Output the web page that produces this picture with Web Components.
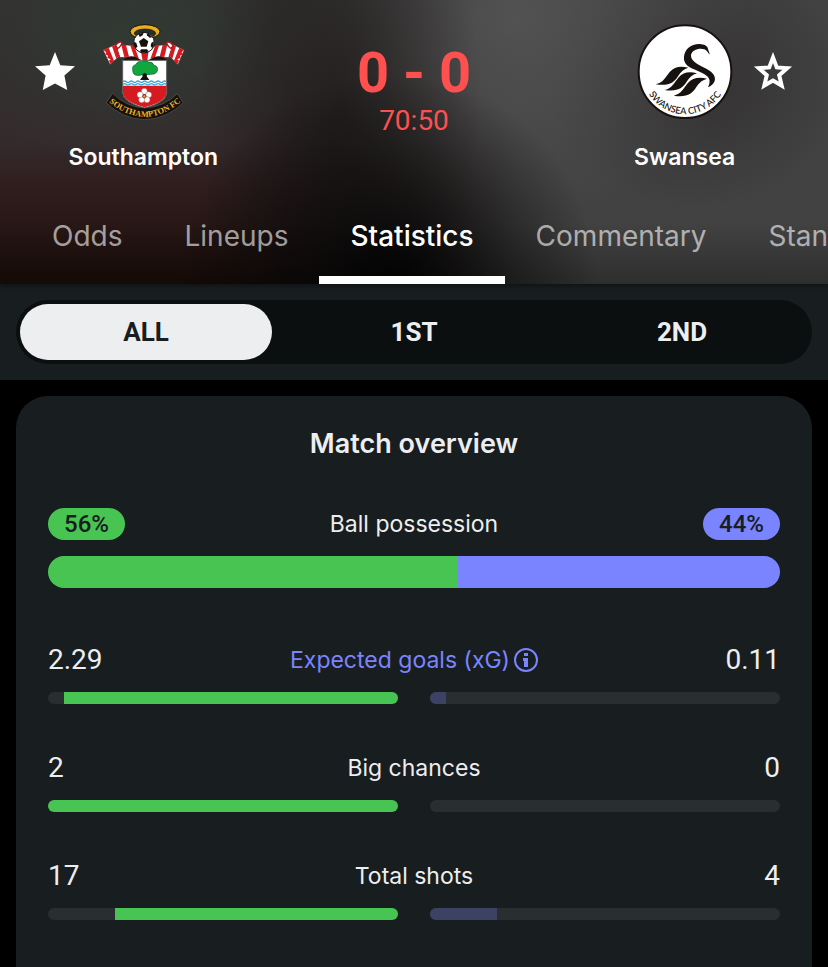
<!DOCTYPE html>
<html lang="en">
<head>
<meta charset="utf-8">
<meta name="viewport" content="width=device-width, initial-scale=1">
<title>Southampton - Swansea</title>
<style>
    body {
        margin: 0;
        background: #000;
        color: #edeef0;
        font-family: Inter, "Liberation Sans", sans-serif;
        --font-number: Roboto, "Liberation Sans", sans-serif;
        --surface: #181d1f;
        --home: #48c453;
        --away: #7a84ff;
        --live: #ff5050;
    }
</style>
</head>
<body>
<match-page>
    <match-header slot="header">
        <team-badge slot="home" name="Southampton" favourite><crest-southampton></crest-southampton></team-badge>
        <live-score slot="score" score="0 - 0" time="70:50"></live-score>
        <team-badge slot="away" name="Swansea" side="away"><crest-swansea></crest-swansea></team-badge>
        <match-tabs slot="tabs" items="Odds,Lineups,Statistics,Commentary,Standings" active="Statistics"></match-tabs>
    </match-header>
    <period-switch slot="periods" items="ALL,1ST,2ND" active="ALL"></period-switch>
    <stats-card heading="Match overview">
        <possession-row label="Ball possession" home="56" away="44"></possession-row>
        <stat-row label="Expected goals (xG)" home="2.29" away="0.11" info></stat-row>
        <stat-row label="Big chances" home="2" away="0"></stat-row>
        <stat-row label="Total shots" home="17" away="4"></stat-row>
    </stats-card>
</match-page>

<script>
class MatchPage extends HTMLElement {
    constructor() {
        super();
        this.attachShadow({ mode: 'open' });
        this.shadowRoot.innerHTML = `
            <style>
                :host { display: flex; flex-direction: column; min-height: 100vh; }
                main { flex: 1; display: flex; flex-direction: column; padding: 16px 16px 0; }
            </style>
            <slot name="header"></slot>
            <slot name="periods"></slot>
            <main><slot></slot></main>
        `;
    }
}

class MatchHeader extends HTMLElement {
    constructor() {
        super();
        this.attachShadow({ mode: 'open' });
        this.shadowRoot.innerHTML = `
            <style>
                :host {
                    display: block;
                    position: relative;
                    overflow: hidden;
                    box-shadow: 0 2px 4px rgba(0, 0, 0, 0.35);
                    /* blurred club colours behind the score */
                    background:
                        linear-gradient(to bottom, transparent 78%, rgba(0, 0, 0, 0.3)),
                        radial-gradient(ellipse 210px 210px at 47% 100%, #050505 5%, transparent),
                        radial-gradient(ellipse 140px 320px at 41% 40%, rgba(30, 26, 26, 0.8), transparent),
                        radial-gradient(ellipse 240px 200px at 62% 6%, rgba(92, 92, 92, 0.6), transparent),
                        radial-gradient(ellipse 150px 130px at 84% 28%, rgba(46, 44, 44, 0.8), transparent),
                        radial-gradient(ellipse 190px 130px at 16% 14%, rgba(48, 60, 52, 0.8), transparent),
                        linear-gradient(to right, transparent 35%, #434242 62%),
                        linear-gradient(to bottom, #333131, #342a2c 50%, #301d1e 66%, #1c0e09);
                }
                .teams { display: grid; grid-template-columns: 9fr 8fr 9fr; padding: 24px 0 15px; }
            </style>
            <div class="teams">
                <slot name="home"></slot>
                <slot name="score"></slot>
                <slot name="away"></slot>
            </div>
            <slot name="tabs"></slot>
        `;
    }
}

class TeamBadge extends HTMLElement {
    constructor() {
        super();
        this.attachShadow({ mode: 'open' });
        const name = this.getAttribute('name');
        const star = this.hasAttribute('favourite')
            ? '<path d="M20 0L25.3 13.2L40 14.3L29.4 23.4L32.2 38L20 31.5L7.8 38L10.6 23.4L0 14.3L14.7 13.2Z" fill="currentColor"/>'
            : '<path d="M20 5.5L23.8 15.4L34.2 16.2L26.2 23.2L28.7 33.6L20 28.6L11.3 33.6L13.8 23.2L5.8 16.2L16.2 15.4Z" fill="none" stroke="currentColor" stroke-width="4"/>';

        this.shadowRoot.innerHTML = `
            <style>
                :host {
                    display: grid;
                    grid-template-columns: 1fr 96px 1fr;
                    grid-template-areas: "left crest right" "name name name";
                    column-gap: 20px;
                    row-gap: 21px;
                    align-items: center;
                }
                button {
                    grid-area: left;
                    justify-self: end;
                    width: 40px;
                    height: 40px;
                    padding: 0;
                    border: 0;
                    background: none;
                    color: #fff;
                }
                :host([side="away"]) button { grid-area: right; justify-self: start; }
                svg { display: block; }
                slot { grid-area: crest; display: block; }
                .name {
                    grid-area: name;
                    text-align: center;
                    color: #fff;
                    font-size: 23px;
                    font-weight: 600;
                    line-height: 32px;
                }
            </style>
            <button type="button" aria-label="Follow ${name}">
                <svg width="40" height="40" viewBox="0 0 40 40">${star}</svg>
            </button>
            <slot></slot>
            <div class="name">${name}</div>
        `;
    }
}

class LiveScore extends HTMLElement {
    constructor() {
        super();
        this.attachShadow({ mode: 'open' });
        this.shadowRoot.innerHTML = `
            <style>
                :host {
                    display: block;
                    padding-top: 17px;
                    text-align: center;
                    color: var(--live);
                    font-family: var(--font-number);
                }
                .score { font-size: 56px; font-weight: 700; line-height: 64px; }
                .time { font-size: 28px; line-height: 32px; }
            </style>
            <div class="score">${this.getAttribute('score')}</div>
            <div class="time">${this.getAttribute('time')}</div>
        `;
    }
}

class MatchTabs extends HTMLElement {
    constructor() {
        super();
        this.attachShadow({ mode: 'open' });
        const active = this.getAttribute('active');
        const links = this.getAttribute('items').split(',').map(item =>
            `<a href="#${item.toLowerCase()}"${item === active ? ' aria-current="page"' : ''}>${item}</a>`
        ).join('');

        this.shadowRoot.innerHTML = `
            <style>
                :host { display: block; }
                nav { display: flex; padding-left: 21px; overflow: hidden; }
                a {
                    flex: none;
                    box-sizing: border-box;
                    height: 96px;
                    padding: 0 31px;
                    border-bottom: 8px solid transparent;
                    color: rgba(255, 255, 255, 0.6);
                    font-size: 28px;
                    line-height: 96px;
                    text-decoration: none;
                }
                a[aria-current] { color: #fff; border-color: #fff; font-weight: 500; }
            </style>
            <nav>${links}</nav>
        `;
    }
}

class PeriodSwitch extends HTMLElement {
    constructor() {
        super();
        this.attachShadow({ mode: 'open' });
        const active = this.getAttribute('active');
        const buttons = this.getAttribute('items').split(',').map(item =>
            `<button type="button" aria-pressed="${item === active}">${item}</button>`
        ).join('');

        this.shadowRoot.innerHTML = `
            <style>
                :host { display: block; padding: 16px; background: var(--surface); }
                div {
                    display: grid;
                    grid-template-columns: repeat(3, 1fr);
                    gap: 16px;
                    padding: 4px;
                    border-radius: 32px;
                    background: #0b0f10;
                }
                button {
                    height: 56px;
                    padding: 0;
                    border: 0;
                    border-radius: 28px;
                    background: none;
                    color: #edeef0;
                    font-family: var(--font-number);
                    font-size: 26px;
                    font-weight: 700;
                }
                button[aria-pressed="true"] { background: #edeef0; color: var(--surface); }
            </style>
            <div>${buttons}</div>
        `;
    }
}

class StatsCard extends HTMLElement {
    constructor() {
        super();
        this.attachShadow({ mode: 'open' });
        this.shadowRoot.innerHTML = `
            <style>
                :host {
                    flex: 1;
                    display: flex;
                    flex-direction: column;
                    gap: 48px;
                    padding: 32px;
                    border-radius: 32px 32px 0 0;
                    background: var(--surface);
                }
                h2 { margin: 0; text-align: center; font-size: 27px; font-weight: 600; line-height: 32px; }
            </style>
            <h2>${this.getAttribute('heading')}</h2>
            <slot></slot>
        `;
    }
}

class PossessionRow extends HTMLElement {
    constructor() {
        super();
        this.attachShadow({ mode: 'open' });
        const home = this.getAttribute('home');
        const away = this.getAttribute('away');

        this.shadowRoot.innerHTML = `
            <style>
                :host { display: block; margin-bottom: 8px; font-size: 23px; line-height: 32px; }
                .head { display: flex; justify-content: space-between; margin-bottom: 16px; }
                .pill {
                    padding: 0 16px;
                    border-radius: 16px;
                    color: var(--surface);
                    font-family: var(--font-number);
                    font-size: 24px;
                    font-weight: 500;
                }
                .bar { display: flex; height: 32px; border-radius: 16px; overflow: hidden; }
                .home { background: var(--home); }
                .away { background: var(--away); }
            </style>
            <div class="head">
                <span class="pill home">${home}%</span>
                <span>${this.getAttribute('label')}</span>
                <span class="pill away">${away}%</span>
            </div>
            <div class="bar">
                <div class="home" style="flex: ${home}"></div>
                <div class="away" style="flex: ${away}"></div>
            </div>
        `;
    }
}

class StatRow extends HTMLElement {
    constructor() {
        super();
        this.attachShadow({ mode: 'open' });
        const label = this.getAttribute('label');
        const home = Number(this.getAttribute('home'));
        const away = Number(this.getAttribute('away'));
        const share = home / (home + away) * 100;
        const icon = `
            <svg width="24" height="24" viewBox="0 0 24 24">
                <circle cx="12" cy="12" r="11" fill="none" stroke="currentColor" stroke-width="2"/>
                <path d="M10 5h4v3h-4zM9 10h5v9h-4v-6H9z" fill="currentColor"/>
            </svg>`;

        this.shadowRoot.innerHTML = `
            <style>
                :host { display: block; }
                .head { display: grid; grid-template-columns: 1fr auto 1fr; margin-bottom: 16px; line-height: 32px; }
                .value { font-family: var(--font-number); font-size: 28px; }
                .value:last-child { text-align: right; }
                .label { font-size: 23px; }
                button {
                    display: flex;
                    align-items: center;
                    gap: 4px;
                    padding: 0;
                    border: 0;
                    background: none;
                    color: var(--away);
                    font-family: inherit;
                    line-height: inherit;
                }
                .bars { display: grid; grid-template-columns: 1fr 1fr; gap: 32px; }
                .bar { display: flex; height: 12px; border-radius: 6px; background: #2a2e31; overflow: hidden; }
                .bar.home { justify-content: flex-end; }
                .home .fill { background: var(--home); }
                .away .fill { background: #3d4265; }
            </style>
            <div class="head">
                <span class="value">${this.getAttribute('home')}</span>
                ${this.hasAttribute('info')
                    ? `<button class="label" type="button">${label}${icon}</button>`
                    : `<span class="label">${label}</span>`}
                <span class="value">${this.getAttribute('away')}</span>
            </div>
            <div class="bars">
                <div class="bar home"><div class="fill" style="width: ${share}%"></div></div>
                <div class="bar away"><div class="fill" style="width: ${100 - share}%"></div></div>
            </div>
        `;
    }
}

class CrestSouthampton extends HTMLElement {
    constructor() {
        super();
        this.attachShadow({ mode: 'open' });
        this.shadowRoot.innerHTML = `
            <style>
                :host { display: block; }
                svg { display: block; width: 96px; height: 96px; }
                text { font: 700 25px "Liberation Serif", serif; fill: #f0b323; }
            </style>
            <svg viewBox="15 27 288 288" role="img" aria-label="Southampton FC">
                <!-- halo -->
                <ellipse cx="165" cy="50" rx="45" ry="21" fill="#e8ae20" stroke="#15110c" stroke-width="3"/>
                <ellipse cx="165" cy="55" rx="32" ry="13" fill="#2b302c" stroke="#15110c" stroke-width="2"/>
                <!-- scarf: hanging ends, then the two folded halves -->
                <path d="M39 105L78 88L88 124L60 149ZM283 105L248 88L238 124L264 149Z" fill="#fff" stroke="#4a1716" stroke-width="2"/>
                <path d="M78 90Q104 88 132 92L165 112L196 92Q222 88 248 90L236 128Q196 122 165 142Q134 122 90 128Z" fill="#fff" stroke="#4a1716" stroke-width="2"/>
                <g fill="#d71920">
                    <path d="M40 105L56 98L72 137L62 147L57 137L62 133L52 128L54 122L46 118L49 112Z"/>
                    <path d="M282 105L268 98L252 137L262 147L267 137L262 133L272 128L270 122L278 118L275 112Z"/>
                    <path d="M66 94L77 89L88 123L79 131Z"/>
                    <path d="M258 94L249 89L238 123L247 131Z"/>
                    <path d="M94 90L108 90L117 125L103 126Z"/>
                    <path d="M232 90L218 90L209 125L223 126Z"/>
                    <path d="M121 92L133 93L147 132L133 127Z"/>
                    <path d="M207 92L195 93L181 132L195 127Z"/>
                    <path d="M152 104L165 112L176 104L172 138L165 142L158 138Z"/>
                </g>
                <path d="M77 91Q86 78 96 82Q94 94 82 101ZM249 91Q240 78 230 82Q232 94 244 101Z" fill="#fff" stroke="#b3161c" stroke-width="4"/>
                <path d="M100 135Q122 112 152 135ZM230 135Q208 112 178 135Z" fill="#15110c"/>
                <!-- ball -->
                <circle cx="162" cy="83" r="31" fill="#fff" stroke="#15110c" stroke-width="3"/>
                <g fill="#15110c">
                    <path d="M161 69L175 79L170 95H153L147 79Z"/>
                    <path d="M146 58Q153 53 161 53L158 61L149 66Z"/>
                    <path d="M170 54Q181 58 187 67L179 68L171 61Z"/>
                    <path d="M191 79Q193 91 187 100L182 93L184 84Z"/>
                    <path d="M132 80Q130 92 137 101L142 94L139 84Z"/>
                    <path d="M149 109Q162 117 176 109L171 103H154Z"/>
                </g>
                <!-- shield -->
                <path d="M98 136H230V232Q230 262 164 279Q98 262 98 232Z" fill="#fff" stroke="#5c5c5c" stroke-width="3"/>
                <path d="M99 212H229V232Q229 260 164 277Q99 260 99 232Z" fill="#d71920"/>
                <g fill="none" stroke="#3ea5dc" stroke-width="4">
                    <path d="M99 200q5-4 10 0t10 0t10 0t10 0t10 0t10 0t10 0t10 0t10 0t10 0t10 0t10 0t10 0"/>
                    <path d="M99 208q5-4 10 0t10 0t10 0t10 0t10 0t10 0t10 0t10 0t10 0t10 0t10 0t10 0t10 0"/>
                </g>
                <!-- tree -->
                <path d="M154 171L158 184L150 195H178L170 184L174 171Z" fill="#15110c"/>
                <path d="M128 164Q126 150 138 149Q142 137 156 140Q166 134 176 141Q189 140 191 150Q206 154 202 168Q198 179 182 178Q172 181 164 174Q152 184 142 181Q128 181 128 164Z" fill="#12a63f" stroke="#0b5a2c" stroke-width="2"/>
                <!-- rose -->
                <g fill="#fff" stroke="#8b2a22" stroke-width="1">
                    <circle cx="163" cy="229" r="9"/>
                    <circle cx="176" cy="239" r="9"/>
                    <circle cx="171" cy="254" r="9"/>
                    <circle cx="155" cy="254" r="9"/>
                    <circle cx="150" cy="239" r="9"/>
                </g>
                <circle cx="163" cy="244" r="5" fill="#d8a43c" stroke="#5a2518" stroke-width="2"/>
                <!-- ribbon -->
                <path d="M68 235Q108 276 164 279Q222 276 262 236L280 263Q230 312 164 314Q98 312 49 263Z" fill="#15110c" stroke="#5c5c5c" stroke-width="2"/>
                <path id="ribbon" d="M60 264Q108 303 164 306Q222 303 270 262" fill="none"/>
                <text text-anchor="middle"><textPath href="#ribbon" startOffset="50%">SOUTHAMPTON FC</textPath></text>
            </svg>
        `;
    }
}

class CrestSwansea extends HTMLElement {
    constructor() {
        super();
        this.attachShadow({ mode: 'open' });
        this.shadowRoot.innerHTML = `
            <style>
                :host { display: block; }
                svg { display: block; width: 96px; height: 96px; }
                text { font: 500 28px Lato, sans-serif; fill: #17120f; }
            </style>
            <svg viewBox="18 27 288 288" role="img" aria-label="Swansea City AFC">
                <circle cx="162" cy="170" r="139" fill="#fff" stroke="#17120f" stroke-width="6"/>
                <g fill="#17120f">
                    <!-- head, neck and breast -->
                    <path d="M236 119C231 114 228 106 220 103C204 98 182 105 180 121C179 137 198 147 217 157C242 168 256 182 251 198C248 207 240 213 231 217C236 206 238 197 233 189C226 178 207 171 189 163C168 154 157 143 159 125C161 101 182 86 206 87C219 88 229 92 231 101C232 108 236 112 236 119Z"/>
                    <!-- wings -->
                    <path d="M74 208C96 204 104 186 116 171C130 154 150 152 172 158C158 162 150 170 142 182C130 202 114 214 74 208Z"/>
                    <path d="M100 225C122 221 130 203 142 188C156 171 176 169 198 175C184 179 176 187 168 199C156 219 140 231 100 225Z"/>
                    <path d="M128 242C150 238 158 220 170 205C184 188 204 186 228 191C212 196 204 204 196 216C184 236 168 248 128 242Z"/>
                </g>
                <path id="arc" d="M39 205A128 128 0 0 0 285 205" fill="none"/>
                <text text-anchor="middle"><textPath href="#arc" startOffset="50%">SWANSEA CITY AFC</textPath></text>
            </svg>
        `;
    }
}

customElements.define('crest-southampton', CrestSouthampton);
customElements.define('crest-swansea', CrestSwansea);
customElements.define('team-badge', TeamBadge);
customElements.define('live-score', LiveScore);
customElements.define('match-tabs', MatchTabs);
customElements.define('match-header', MatchHeader);
customElements.define('period-switch', PeriodSwitch);
customElements.define('possession-row', PossessionRow);
customElements.define('stat-row', StatRow);
customElements.define('stats-card', StatsCard);
customElements.define('match-page', MatchPage);
</script>
</body>
</html>
